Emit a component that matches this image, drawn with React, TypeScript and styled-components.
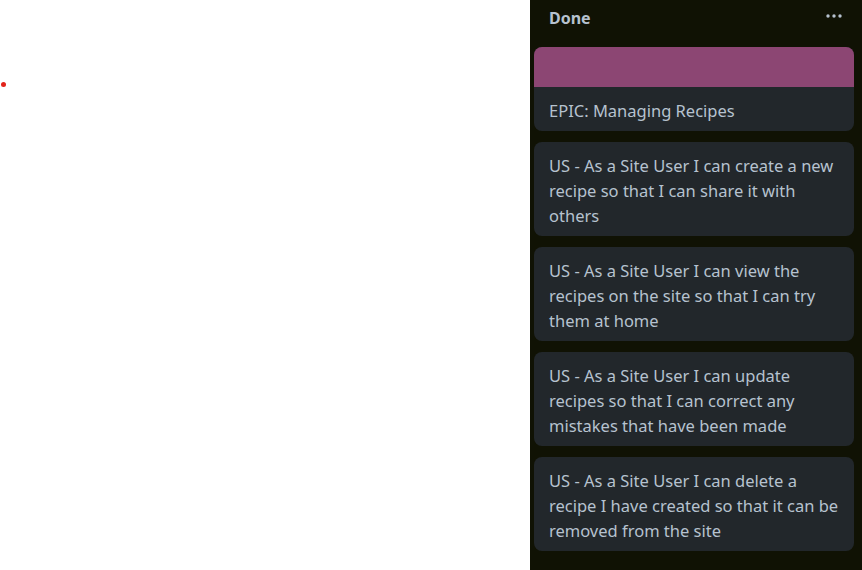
import styled, { createGlobalStyle } from 'styled-components';

const GlobalStyle = createGlobalStyle`
  html, body {
    margin: 0;
    padding: 0;
    background: #ffffff;
  }
  * {
    box-sizing: border-box;
  }
`;

const cards = [
  { title: 'EPIC: Managing Recipes', cover: '#8c4673' },
  { title: 'US - As a Site User I can create a new recipe so that I can share it with others' },
  { title: 'US - As a Site User I can view the recipes on the site so that I can try them at home' },
  {
    title:
      'US - As a Site User I can update recipes so that I can correct any mistakes that have been made',
  },
  {
    title:
      'US - As a Site User I can delete a recipe I have created so that it can be removed from the site',
  },
];

const App = () => {
  return (
    <>
      <GlobalStyle />
      <Page>
        <Canvas>
          <Marker />
        </Canvas>
        <List>
          <ListHeader>
            <ListTitle>Done</ListTitle>
            <MoreButton aria-label="List actions">
              <svg width="16" height="4" viewBox="0 0 16 4">
                <circle cx="2" cy="2" r="1.7" fill="#b6c2cf" />
                <circle cx="8" cy="2" r="1.7" fill="#b6c2cf" />
                <circle cx="14" cy="2" r="1.7" fill="#b6c2cf" />
              </svg>
            </MoreButton>
          </ListHeader>
          <Cards>
            {cards.map((c) => (
              <Card key={c.title}>
                {c.cover && <Cover $color={c.cover} />}
                <CardTitle>{c.title}</CardTitle>
              </Card>
            ))}
          </Cards>
        </List>
      </Page>
    </>
  );
};

export default App;

const Page = styled.div`
  display: flex;
  width: 862px;
  height: 570px;
  overflow: hidden;
  font-family: 'Noto Sans', 'Open Sans', sans-serif;
`;

const Canvas = styled.div`
  flex: 0 0 530px;
  padding: 82px 0 0 1px;
`;

const Marker = styled.div`
  width: 5px;
  height: 5px;
  border-radius: 50%;
  background: #e2231a;
`;

const List = styled.div`
  flex: 0 0 332px;
  background: #101204;
  padding: 0 8px 0 4px;
  display: flex;
  flex-direction: column;
`;

const ListHeader = styled.div`
  display: flex;
  align-items: center;
  justify-content: space-between;
  height: 36px;
  padding: 0 12px 0 15px;
`;

const ListTitle = styled.h2`
  margin: 0;
  font-size: 16px;
  font-weight: 700;
  color: #b6c2cf;
`;

const MoreButton = styled.div`
  display: flex;
  align-items: center;
  margin-top: -4px;
`;

const Cards = styled.div`
  display: flex;
  flex-direction: column;
  gap: 11px;
  margin-top: 11px;
`;

const Card = styled.div`
  background: #22272b;
  border-radius: 8px;
  overflow: hidden;
`;

const Cover = styled.div<{ $color: string }>`
  height: 40px;
  background: ${(p) => p.$color};
`;

const CardTitle = styled.div`
  padding: 11px 12px 8px 15px;
  font-size: 16.5px;
  line-height: 25px;
  color: #b6c2cf;
`;
